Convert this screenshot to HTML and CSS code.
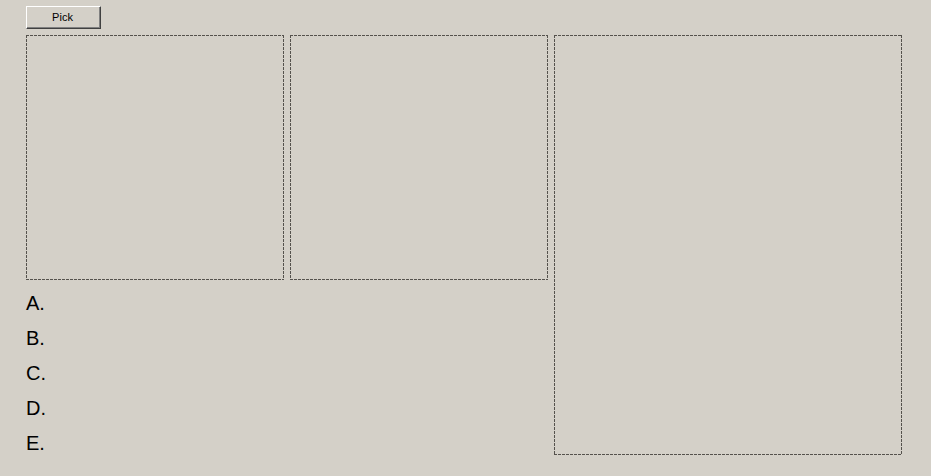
FILE: index.html
```html
<!DOCTYPE html>
<html>
<head>
<meta charset="utf-8">
<link rel="stylesheet" href="styles.css">
</head>
<body>
<div class="form">
  <button class="btn">Pick</button>
  <div class="main">
    <div class="left">
      <div class="pics">
        <div class="dash pic"></div>
        <div class="dash pic"></div>
      </div>
      <ul class="answers">
        <li>A.</li>
        <li>B.</li>
        <li>C.</li>
        <li>D.</li>
        <li>E.</li>
      </ul>
    </div>
    <div class="dash big"></div>
  </div>
</div>
</body>
</html>
```
FILE: styles.css
```css
html, body {
  margin: 0;
  padding: 0;
  background: #d4d0c8;
}
.form {
  width: 931px;
  height: 476px;
  padding: 6px 0 0 26px;
  box-sizing: border-box;
  font-family: "Liberation Sans", Arial, sans-serif;
  color: #000;
}
.btn {
  display: block;
  width: 75px;
  height: 23px;
  margin: 0;
  padding: 0 2px 0 0;
  background: #d4d0c8;
  border: 1px solid;
  border-color: #ffffff #404040 #404040 #ffffff;
  box-shadow: inset -1px -1px 0 #808080;
  font-family: "Liberation Sans", Arial, sans-serif;
  font-size: 11px;
  color: #000;
  line-height: 19px;
  text-align: center;
}
.main {
  display: flex;
  gap: 6px;
  margin-top: 6px;
}
.left {
  display: flex;
  flex-direction: column;
}
.pics {
  display: flex;
  gap: 6px;
}
.dash {
  box-sizing: border-box;
  background:
    repeating-linear-gradient(90deg, #55524d 0 3px, transparent 3px 4px) top left / 100% 1px no-repeat,
    repeating-linear-gradient(90deg, #55524d 0 3px, transparent 3px 4px) bottom left / 100% 1px no-repeat,
    repeating-linear-gradient(180deg, #55524d 0 3px, transparent 3px 4px) top left / 1px 100% no-repeat,
    repeating-linear-gradient(180deg, #55524d 0 3px, transparent 3px 4px) top right / 1px 100% no-repeat;
}
.pic {
  width: 258px;
  height: 245px;
}
.big {
  width: 348px;
  height: 420px;
}
.answers {
  list-style: none;
  margin: 6px 0 0 0;
  padding: 0;
  font-size: 20px;
  line-height: 35px;
}
.answers li {
  margin: 0;
  padding: 0;
}
```
